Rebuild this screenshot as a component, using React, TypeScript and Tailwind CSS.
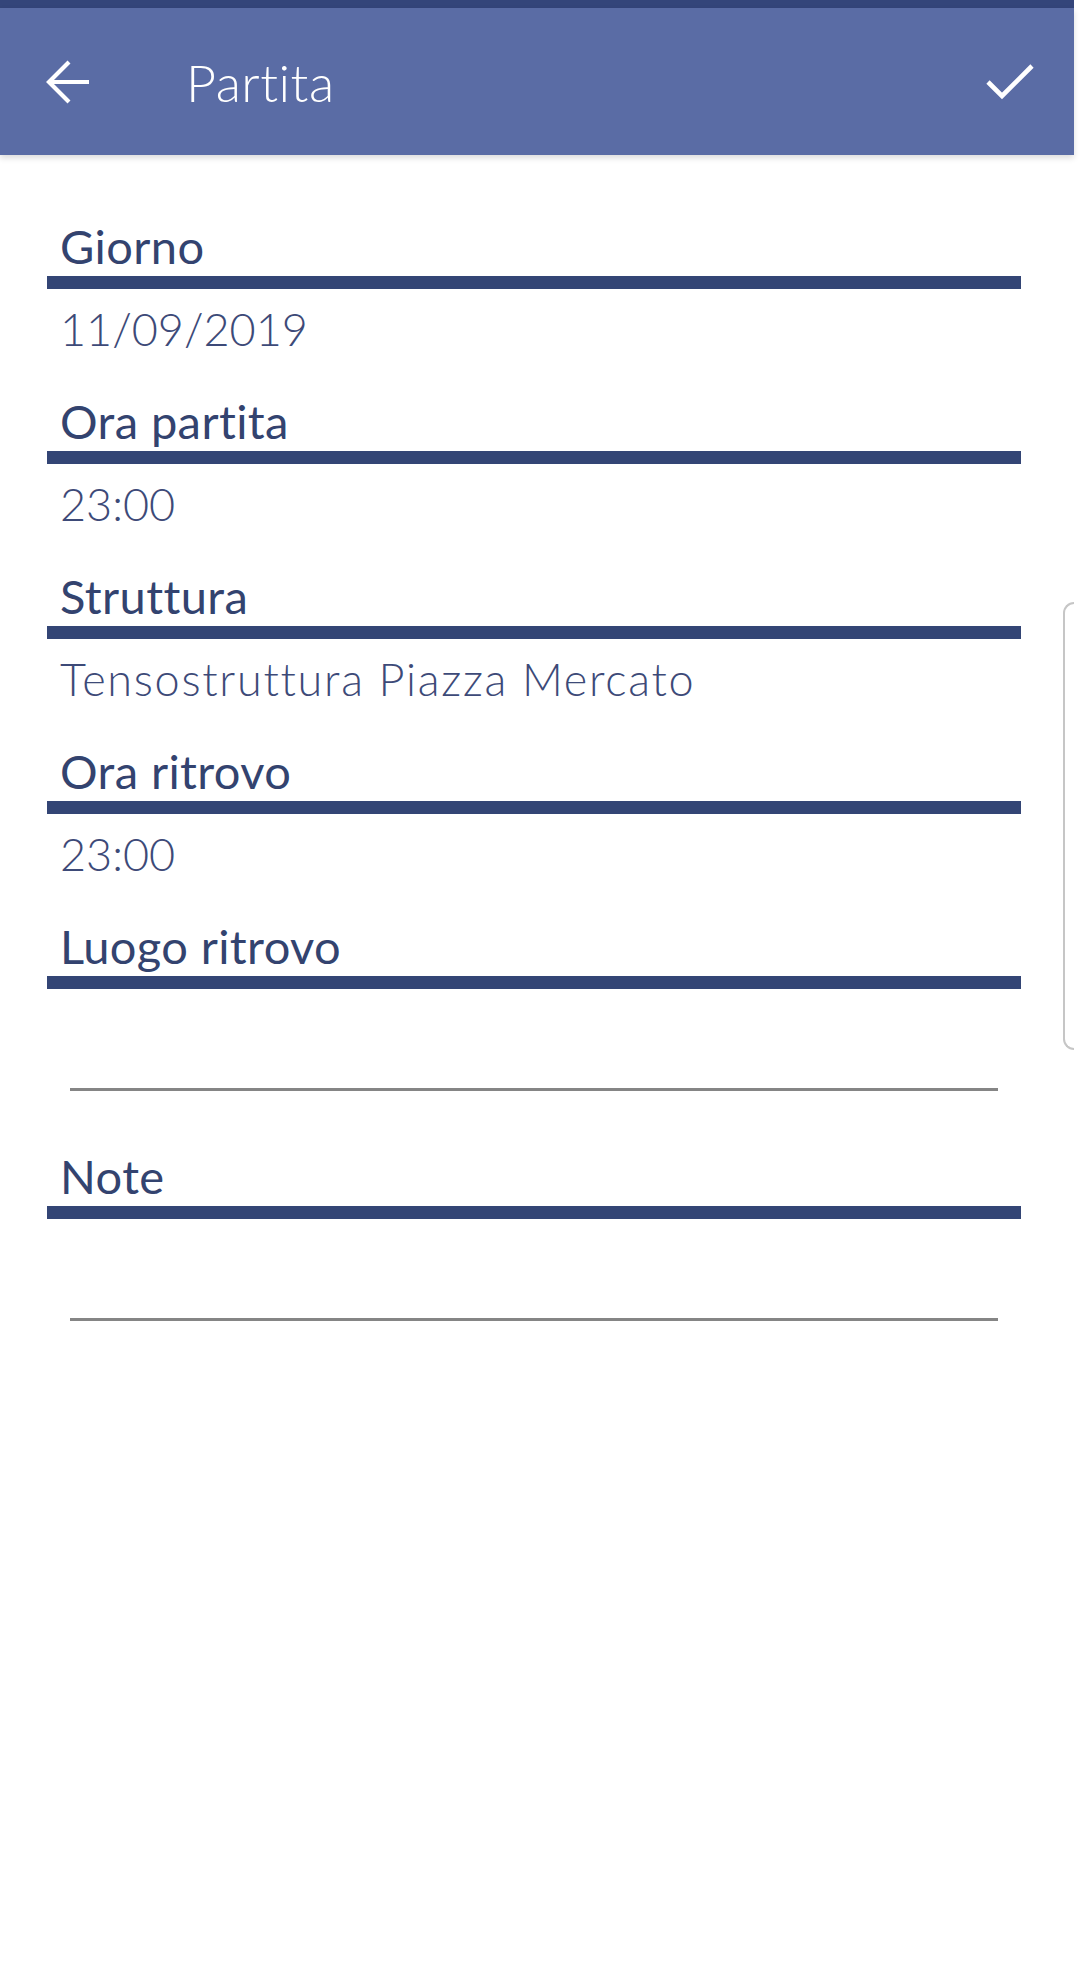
import { type ReactElement } from "react";

type Field = { label: string; value?: string; wide?: boolean };

const fields: Field[] = [
  { label: "Giorno", value: "11/09/2019" },
  { label: "Ora partita", value: "23:00" },
  { label: "Struttura", value: "Tensostruttura Piazza Mercato", wide: true },
  { label: "Ora ritrovo", value: "23:00" },
  { label: "Luogo ritrovo" },
  { label: "Note" },
];

function BackArrow(): ReactElement {
  return (
    <svg width="44" height="44" viewBox="0 0 44 44" fill="none" stroke="white" strokeWidth="4.2">
      <path d="M43 22H3" />
      <path d="M23 2L3 22L23 42" strokeLinejoin="miter" />
    </svg>
  );
}

function CheckIcon(): ReactElement {
  return (
    <svg width="48" height="38" viewBox="0 0 48 38" fill="none" stroke="white" strokeWidth="4.6">
      <path d="M2 19L16 33L46 3" strokeLinejoin="miter" />
    </svg>
  );
}

function FieldRow({ label, value, wide }: Field): ReactElement {
  return (
    <div className="flex flex-col">
      <div className="h-[47px] pl-[13px] text-[47px] leading-[47px] tracking-[0.4px] text-[#33436f]">{label}</div>
      <div className="mt-[6px] h-[13px] bg-[#334575]" />
      {value !== undefined ? (
        <div
          className={
            wide
              ? "mt-[18px] mb-[46px] h-[45px] pl-[13px] text-[45px] leading-[45px] font-light tracking-[1.7px] text-[#3d4a78]"
              : "mt-[18px] mb-[46px] h-[45px] pl-[13px] text-[45px] leading-[45px] font-light text-[#3d4a78]"
          }
        >
          {value}
        </div>
      ) : (
        <div className="mt-[99px] mb-[62px] pl-[23px]">
          <div className="h-[3px] w-[928px] bg-[#858585]" />
        </div>
      )}
    </div>
  );
}

export default function App(): ReactElement {
  return (
    <div className="relative min-h-[1972px] bg-white font-['Lato','Liberation_Sans',sans-serif]">
      <div className="w-[1074px]">
        <div className="h-2 bg-[#34457a]" />
        <header className="flex h-[147px] items-center bg-[#5a6ca5] pl-[46px] pr-[40px] shadow-[0_3px_6px_rgba(0,0,0,0.14)]">
          <div className="w-[140px]">
            <BackArrow />
          </div>
          <h1 className="flex-1 text-[52px] leading-[52px] font-light tracking-[0.5px] text-white">Partita</h1>
          <CheckIcon />
        </header>
      </div>

      <main className="ml-[47px] mt-[68px] w-[974px]">
        {fields.map((f) => (
          <FieldRow key={f.label} label={f.label} value={f.value} wide={f.wide} />
        ))}
      </main>

      <div className="absolute left-[1063px] top-[602px] h-[448px] w-[11px] rounded-l-[11px] border-y-2 border-l-2 border-[#c6c6c6]" />
    </div>
  );
}
